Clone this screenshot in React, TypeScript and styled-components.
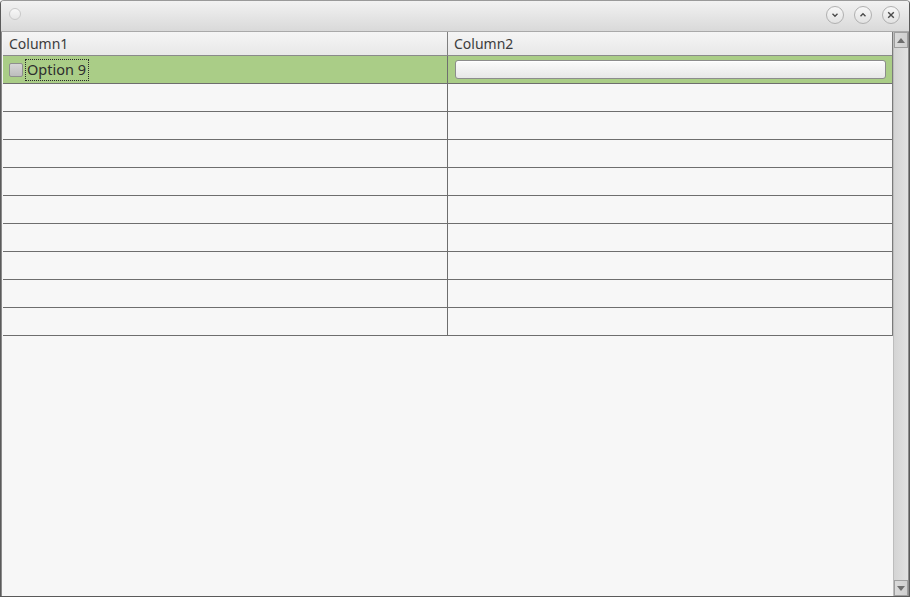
import React from "react";
import styled, { createGlobalStyle } from "styled-components";

const GlobalStyle = createGlobalStyle`
  html, body {
    margin: 0;
    padding: 0;
    background: #f7f7f7;
  }
  body {
    font-family: "Noto Sans", "DejaVu Sans", sans-serif;
  }
`;

const Window = styled.div`
  width: 910px;
  height: 597px;
  box-sizing: border-box;
  border: 1px solid #5a5a5a;
  border-top-color: #9a9a9a;
  border-radius: 4px 4px 0 0;
  display: flex;
  flex-direction: column;
  overflow: hidden;
  background: #f7f7f7;
`;

const TitleBar = styled.div`
  height: 31px;
  flex-shrink: 0;
  box-sizing: border-box;
  border-bottom: 1px solid #a9a9a9;
  background: linear-gradient(#f2f2f2, #d9d9d9);
  display: flex;
  align-items: center;
  padding: 0 9px 0 8px;
`;

const Dot = styled.div`
  width: 12px;
  height: 12px;
  border-radius: 50%;
  box-sizing: border-box;
  border: 1px solid #c9c9c9;
  background: linear-gradient(#f8f8f8, #e6e6e6);
  margin-top: -4px;
`;

const Spacer = styled.div`
  flex: 1;
`;

const Controls = styled.div`
  display: flex;
  gap: 10px;
  margin-top: -3px;
`;

const RoundButton = styled.div`
  width: 18px;
  height: 18px;
  border-radius: 50%;
  box-sizing: border-box;
  border: 1px solid #b0b0b0;
  background: linear-gradient(#f7f7f7, #e2e2e2);
  display: flex;
  align-items: center;
  justify-content: center;
  color: #4a4a4a;
`;

const Body = styled.div`
  flex: 1;
  display: flex;
  min-height: 0;
  box-shadow: inset 1px 0 0 #8a8a8a;
`;

const TableArea = styled.div`
  flex: 1;
  padding-left: 2px;
  display: flex;
  flex-direction: column;
`;

const Grid = styled.div`
  display: grid;
  grid-template-columns: 445px 1fr;
  border-right: 1px solid #7a7a7a;
`;

const HeadCell = styled.div<{ $last?: boolean }>`
  height: 23px;
  border-bottom: 1px solid #8a8a8a;
  border-right: ${(p) => (p.$last ? "none" : "1px solid #7e7e7e")};
  background: linear-gradient(#f5f5f5, #e8e8e8);
  display: flex;
  align-items: center;
  padding-left: 6px;
  font-size: 14px;
  color: #3c3c3c;
`;

const Cell = styled.div<{ $last?: boolean; $selected?: boolean }>`
  height: 27px;
  border-bottom: 1px solid #6e6e6e;
  border-right: ${(p) => (p.$last ? "none" : "1px solid #6e6e6e")};
  background: ${(p) => (p.$selected ? "#aacd87" : "#f7f7f7")};
  display: flex;
  align-items: center;
  font-size: 14px;
  color: #2e2e2e;
`;

const CheckBox = styled.div`
  width: 14px;
  height: 14px;
  margin-left: 6px;
  border-radius: 2px;
  box-sizing: border-box;
  border: 1px solid #8e8e8e;
  background: linear-gradient(#d6d6d6, #bdbdbd);
`;

const Label = styled.span`
  margin-left: 2px;
  padding: 0 2px 0 1px;
  height: 22px;
  box-sizing: border-box;
  line-height: 19px;
  border: 1px dotted #2a2a2a;
  font-size: 14.5px;
  color: #2e2e2e;
`;

const Field = styled.div`
  flex: 1;
  height: 19px;
  margin: 0 6px 0 7px;
  box-sizing: border-box;
  border: 1px solid #8c8c8c;
  border-radius: 3px;
  background: linear-gradient(#fbfbfb, #e7e7e7);
  box-shadow: inset 0 1px 0 #ffffff;
`;

const ScrollBar = styled.div`
  width: 14px;
  flex-shrink: 0;
  display: flex;
  flex-direction: column;
  background: linear-gradient(90deg, #d4d4d4, #e2e2e2);
  border-left: 1px solid #bdbdbd;
  border-right: 1px solid #8d8d8d;
`;

const Track = styled.div`
  flex: 1;
`;

const Arrow = styled.div`
  height: 16px;
  box-sizing: border-box;
  border: 1px solid #9e9e9e;
  background: linear-gradient(90deg, #dadada, #d0d0d0);
  display: flex;
  align-items: center;
  justify-content: center;
  color: #6e6e6e;
`;

const rows = Array.from({ length: 10 }, (_, i) => i);

function App() {
  return (
    <>
      <GlobalStyle />
      <Window>
        <TitleBar>
          <Dot />
          <Spacer />
          <Controls>
            <RoundButton>
              <svg width="8" height="8" viewBox="0 0 8 8">
                <path d="M1.5 2.8 L4 5.2 L6.5 2.8" fill="none" stroke="currentColor" strokeWidth="1.4" />
              </svg>
            </RoundButton>
            <RoundButton>
              <svg width="8" height="8" viewBox="0 0 8 8">
                <path d="M1.5 5.2 L4 2.8 L6.5 5.2" fill="none" stroke="currentColor" strokeWidth="1.4" />
              </svg>
            </RoundButton>
            <RoundButton>
              <svg width="8" height="8" viewBox="0 0 8 8">
                <path d="M1.2 1.2 L6.8 6.8 M6.8 1.2 L1.2 6.8" fill="none" stroke="currentColor" strokeWidth="1.4" />
              </svg>
            </RoundButton>
          </Controls>
        </TitleBar>
        <Body>
          <TableArea>
            <Grid>
              <HeadCell>Column1</HeadCell>
              <HeadCell $last>Column2</HeadCell>
              {rows.map((i) =>
                i === 0 ? (
                  <React.Fragment key={i}>
                    <Cell $selected>
                      <CheckBox />
                      <Label>Option 9</Label>
                    </Cell>
                    <Cell $selected $last>
                      <Field />
                    </Cell>
                  </React.Fragment>
                ) : (
                  <React.Fragment key={i}>
                    <Cell />
                    <Cell $last />
                  </React.Fragment>
                )
              )}
            </Grid>
          </TableArea>
          <ScrollBar>
            <Arrow>
              <svg width="8" height="5" viewBox="0 0 8 5">
                <path d="M0 5 L4 0 L8 5 Z" fill="currentColor" />
              </svg>
            </Arrow>
            <Track />
            <Arrow>
              <svg width="8" height="5" viewBox="0 0 8 5">
                <path d="M0 0 L4 5 L8 0 Z" fill="currentColor" />
              </svg>
            </Arrow>
          </ScrollBar>
        </Body>
      </Window>
    </>
  );
}

export default App;
